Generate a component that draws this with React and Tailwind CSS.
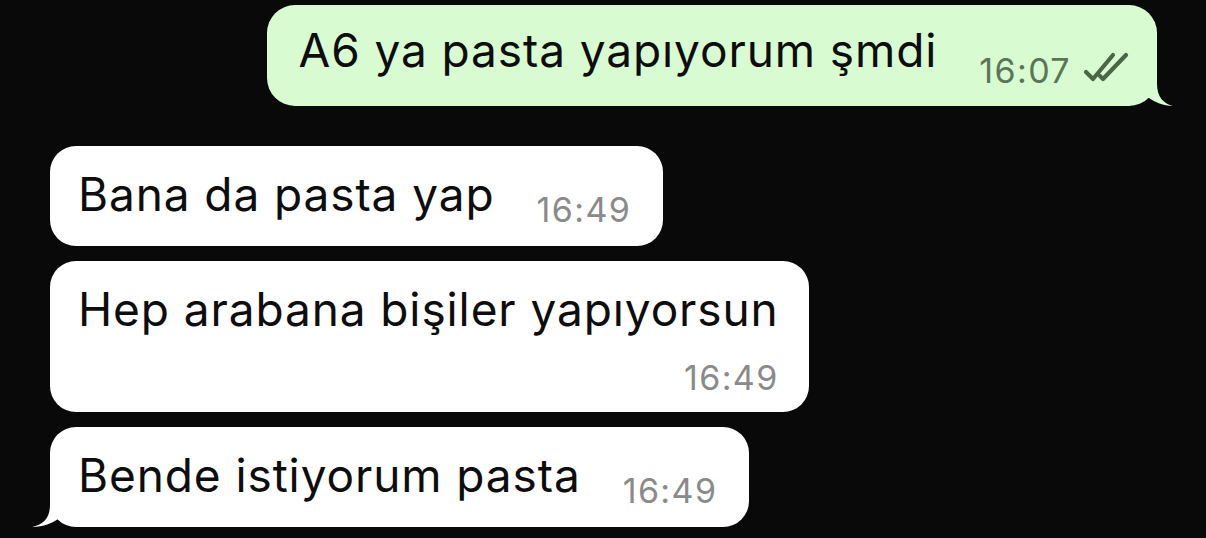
import React from 'react';

const font = "font-['Inter','Liberation_Sans',sans-serif]";
const msgText = 'text-[46px] leading-[56px] tracking-[0.9px] text-[#0d0d0d] whitespace-nowrap';
const timeText = 'text-[34px] leading-[24px] tracking-[1.4px] whitespace-nowrap';

const DoubleCheck = () => (
    <svg width="46" height="30" viewBox="0 0 46 30" className="mb-[-4px]">
        <path d="M3 20 L10 27 L30 3" fill="none" stroke="#4a6547" strokeWidth="4.2" strokeLinecap="round" strokeLinejoin="round" />
        <path d="M17 24 L20 27 L43 3" fill="none" stroke="#4a6547" strokeWidth="4.2" strokeLinecap="round" strokeLinejoin="round" />
    </svg>
);

const OutTail = () => (
    <svg
        width="48"
        height="40"
        viewBox="-30 -40 48 40"
        className="absolute right-[-18px] bottom-0"
    >
        <path d="M-30 -40 L0 -40 L0 -22 C0 -9 7 -2 16 0 C6 0 -2 -4 -8 -8 L-30 -8 Z" fill="#d9fbd1" />
    </svg>
);

const InTail = () => (
    <svg
        width="48"
        height="40"
        viewBox="-18 -40 48 40"
        className="absolute left-[-18px] bottom-0"
    >
        <path d="M30 -40 L0 -40 L0 -22 C0 -9 -7 -2 -18 0 C-6 0 2 -4 8 -8 L30 -8 Z" fill="#ffffff" />
    </svg>
);

const Incoming = ({ text, time, tail }) => (
    <div className="relative self-start ml-[50px] h-[100px] bg-white rounded-[26px] pt-[20px] pl-[28px] pr-[32px]">
        <div className="flex items-end gap-[42px]">
            <span className={msgText}>{text}</span>
            <span className={`${timeText} text-[#8a8a8a]`}>{time}</span>
        </div>
        {tail && <InTail />}
    </div>
);

export default function App() {
    return (
        <div className={`w-[1206px] h-[538px] overflow-hidden bg-[#090909] flex flex-col pt-[5px] ${font}`}>
            {/* outgoing */}
            <div className="relative self-end mr-[49px] h-[101px] bg-[#d9fbd1] rounded-[28px] pt-[17px] pl-[32px] pr-[28px]">
                <div className="flex items-end">
                    <span className={msgText}>A6 ya pasta yapıyorum şmdi</span>
                    <span className={`ml-[42px] mb-[-5px] ${timeText} text-[#5a7657]`}>16:07</span>
                    <span className="ml-[12px] flex items-end">
                        <DoubleCheck />
                    </span>
                </div>
                <OutTail />
            </div>

            <div className="mt-[40px] flex flex-col gap-[15px]">
                <Incoming text="Bana da pasta yap" time="16:49" />

                <div className="relative self-start ml-[50px] h-[151px] bg-white rounded-[26px] flex flex-col pt-[20px] pl-[28px] pr-[30px]">
                    <span className={msgText}>Hep arabana bişiler yapıyorsun</span>
                    <span className={`mt-[29px] text-right ${timeText} text-[#8a8a8a]`}>16:49</span>
                </div>

                <Incoming text="Bende istiyorum pasta" time="16:49" tail />
            </div>
        </div>
    );
}
